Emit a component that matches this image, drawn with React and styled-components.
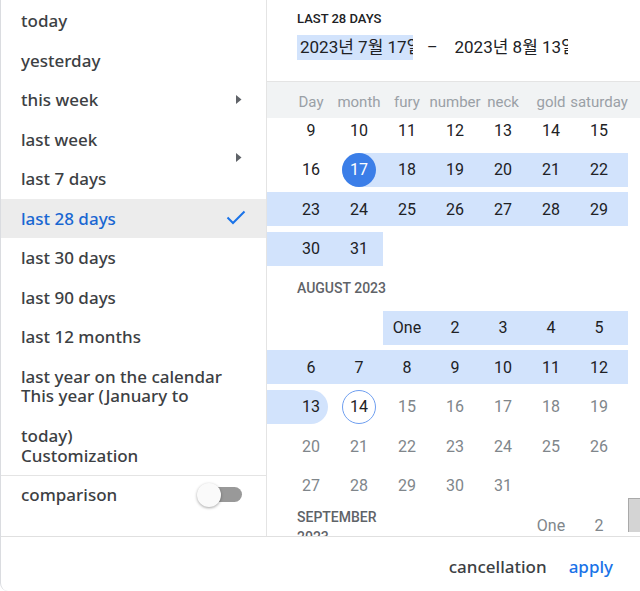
import React from "react";
import styled, { createGlobalStyle, css } from "styled-components";

const Global = createGlobalStyle`
  html, body { margin: 0; padding: 0; background: #fff; }
  * { box-sizing: border-box; }
`;

const SANS = `"Noto Sans", "Open Sans", sans-serif`;
const ROBOTO = `Roboto, "Noto Sans CJK KR", sans-serif`;

const Dialog = styled.div`
  width: 640px;
  height: 591px;
  display: flex;
  flex-direction: column;
  border-left: 1px solid #dadce0;
  border-bottom-left-radius: 8px;
  overflow: hidden;
  background: #fff;
`;

const Main = styled.div`
  display: flex;
  height: 536px;
`;

const Sidebar = styled.div`
  width: 266px;
  flex: none;
  border-right: 1px solid #e4e4e4;
  display: flex;
  flex-direction: column;
  padding-top: 1px;
`;

const Item = styled.div`
  height: 39.5px;
  flex: none;
  display: flex;
  align-items: center;
  padding: 0 20px 0 20px;
  font-family: ${SANS};
  font-size: 17px;
  font-weight: 500;
  line-height: 39.5px;
  color: ${(p) => (p.$active ? "#1967d2" : "#3c4043")};
  background: ${(p) => (p.$active ? "#ececec" : "transparent")};
`;

const ItemText = styled.span`
  flex: 1;
  max-width: 212px;
`;

const Arrow = styled.svg`
  flex: none;
  margin-left: auto;
  margin-right: 4px;
  ${(p) => p.$shift && css`transform: translateY(${p.$shift}px);`}
`;

const Check = styled.svg`
  flex: none;
  margin-left: auto;
`;

const CompareRow = styled.div`
  border-top: 1px solid #e4e4e4;
  height: 38px;
  display: flex;
  align-items: center;
  justify-content: space-between;
  padding: 0 24px 0 20px;
  font-family: ${SANS};
  font-size: 17px;
  font-weight: 500;
  color: #3c4043;
`;

const Toggle = styled.span`
  display: grid;
  align-items: center;
  width: 45px;
  height: 24px;
  & > * { grid-area: 1 / 1; }
`;

const Track = styled.span`
  justify-self: end;
  width: 36px;
  height: 15px;
  border-radius: 8px;
  background: #999;
`;

const Knob = styled.span`
  justify-self: start;
  width: 24px;
  height: 24px;
  border-radius: 50%;
  background: #fafafa;
  box-shadow: 0 1px 3px rgba(0, 0, 0, 0.35);
`;

const Panel = styled.div`
  flex: 1;
  position: relative;
  display: flex;
  flex-direction: column;
  overflow: hidden;
`;

const Header = styled.div`
  height: 82px;
  flex: none;
  border-bottom: 1px solid #e4e4e4;
  padding: 11px 0 0 30px;
`;

const Title = styled.div`
  font-family: ${ROBOTO};
  font-size: 13px;
  font-weight: 500;
  line-height: 16px;
  color: #202124;
`;

const DateRow = styled.div`
  display: flex;
  align-items: center;
  gap: 14px;
  margin-top: 8px;
`;

const DateBox = styled.div`
  width: 116px;
  height: 25px;
  padding: 0 0 0 3px;
  overflow: hidden;
  white-space: nowrap;
  font-family: ${ROBOTO};
  font-size: 17px;
  line-height: 25px;
  color: #202124;
  background: ${(p) => (p.$selected ? "#d2e3fc" : "transparent")};
`;

const Dash = styled.span`
  font-family: ${ROBOTO};
  font-size: 16px;
  color: #202124;
`;

const Weekdays = styled.div`
  height: 36px;
  flex: none;
  background: #f1f3f4;
  display: flex;
  align-items: center;
  padding: 4px 0 0 20px;
`;

const Weekday = styled.span`
  width: 48px;
  flex: none;
  display: flex;
  justify-content: center;
  white-space: nowrap;
  font-family: ${ROBOTO};
  font-size: 15px;
  color: #9aa0a6;
`;

const Body = styled.div`
  flex: 1;
  margin-top: -7.75px;
  overflow: hidden;
`;

const Row = styled.div`
  height: 39.5px;
  display: flex;
  align-items: center;
`;

const Pad = styled.span`
  flex: none;
  width: ${(p) => p.$w}px;
  height: 34px;
  background: ${(p) => (p.$on ? "#d2e3fc" : "transparent")};
`;

const Cell = styled.span`
  flex: none;
  width: 48px;
  height: 34px;
  display: grid;
  & > * { grid-area: 1 / 1; }
`;

const Band = styled.span`
  background: #d2e3fc;
  ${(p) => p.$start && css`margin-left: 7px; border-radius: 17px 0 0 17px;`}
  ${(p) => p.$end && css`margin-right: 7px; border-radius: 0 17px 17px 0;`}
`;

const Num = styled.span`
  justify-self: center;
  width: 34px;
  height: 34px;
  border-radius: 50%;
  display: flex;
  align-items: center;
  justify-content: center;
  font-family: ${ROBOTO};
  font-size: 16px;
  color: ${(p) => (p.$future ? "#80868b" : "#202124")};
  ${(p) => p.$start && css`background: #3b7ee8; color: #fff;`}
  ${(p) => p.$today && css`border: 1px solid #6f9ff0;`}
`;

const MonthLabel = styled.div`
  height: 39.5px;
  display: flex;
  align-items: center;
  padding-left: 30px;
  font-family: ${ROBOTO};
  font-size: 14px;
  font-weight: 500;
  color: #5f6368;
`;

const InlineLabel = styled.span`
  flex: none;
  align-self: flex-start;
  width: ${(p) => p.$w}px;
  padding: 2px 0 0 10px;
  font-family: ${ROBOTO};
  font-size: 14px;
  font-weight: 500;
  line-height: 20px;
  color: #5f6368;
`;

const Thumb = styled.span`
  position: absolute;
  right: 0;
  top: 498px;
  width: 12px;
  height: 34px;
  background: #d4d4d4;
  border-top: 1px solid #a9a9a9;
  border-left: 1px solid #a9a9a9;
`;

const Footer = styled.div`
  flex: 1;
  border-top: 1px solid #e0e0e0;
  display: flex;
  justify-content: flex-end;
  align-items: center;
  gap: 22px;
  padding: 4px 27px 0 0;
`;

const Btn = styled.button`
  border: 0;
  background: none;
  padding: 0;
  font-family: ${SANS};
  font-size: 17px;
  font-weight: 500;
  color: ${(p) => (p.$primary ? "#1a73e8" : "#3c4043")};
`;

const START = new Date(2023, 6, 17).getTime();
const END = new Date(2023, 7, 13).getTime();
const TODAY = new Date(2023, 7, 14).getTime();

function weeksOf(y, m) {
  const offset = new Date(y, m, 1).getDay();
  const days = new Date(y, m + 1, 0).getDate();
  const cells = Array(offset).fill(null);
  for (let d = 1; d <= days; d++) cells.push(new Date(y, m, d).getTime());
  while (cells.length % 7) cells.push(null);
  const weeks = [];
  for (let i = 0; i < cells.length; i += 7) weeks.push(cells.slice(i, i + 7));
  return weeks;
}

const inRange = (t) => t !== null && t >= START && t <= END;

function DayCell({ t }) {
  if (t === null) return <Cell />;
  const d = new Date(t).getDate();
  const isStart = t === START;
  const isEnd = t === END;
  return (
    <Cell>
      {inRange(t) && <Band $start={isStart} $end={isEnd} />}
      <Num $future={t > TODAY} $start={isStart} $today={t === TODAY}>
        {d === 1 ? "One" : d}
      </Num>
    </Cell>
  );
}

function Week({ days, label }) {
  const first = days[0];
  const last = days[6];
  const empties = label ? days.findIndex((x) => x !== null) : 0;
  return (
    <Row>
      <Pad $w={20} $on={inRange(first) && first !== START} />
      {label && <InlineLabel $w={96}>{label}</InlineLabel>}
      {label && <Pad $w={(empties - 2) * 48} />}
      {days.slice(empties).map((t, i) => (
        <DayCell key={i} t={t} />
      ))}
      <Pad $w={5} $on={inRange(last) && last !== END} />
    </Row>
  );
}

const ArrowIcon = ({ shift }) => (
  <Arrow width="6" height="9" viewBox="0 0 6 9" $shift={shift}>
    <path d="M0 0 L5.5 4.5 L0 9 Z" fill="#5f6368" />
  </Arrow>
);

const items = [
  { t: "today" },
  { t: "yesterday" },
  { t: "this week", arrow: 0 },
  { t: "last week", arrow: 18 },
  { t: "last 7 days" },
  { t: "last 28 days", active: true },
  { t: "last 30 days" },
  { t: "last 90 days" },
  { t: "last 12 months" },
  { t: "last year on the calendar" },
  { t: "This year (January to today)" },
  { t: "Customization" },
];

const weekdayNames = ["Day", "month", "fury", "number", "neck", "gold", "saturday"];

export default function App() {
  const july = weeksOf(2023, 6).slice(2);
  const aug = weeksOf(2023, 7);
  const sep = weeksOf(2023, 8).slice(0, 1);
  return (
    <>
      <Global />
      <Dialog>
        <Main>
          <Sidebar>
            {items.map((it) => (
              <Item key={it.t} $active={it.active}>
                <ItemText>{it.t}</ItemText>
                {it.arrow !== undefined && <ArrowIcon shift={it.arrow} />}
                {it.active && (
                  <Check width="20" height="16" viewBox="0 0 20 16">
                    <path d="M1.5 7.5 L7 13 L18.5 1.5" fill="none" stroke="#1a73e8" strokeWidth="2" />
                  </Check>
                )}
              </Item>
            ))}
            <CompareRow>
              <span>comparison</span>
              <Toggle>
                <Track />
                <Knob />
              </Toggle>
            </CompareRow>
          </Sidebar>
          <Panel>
            <Header>
              <Title>LAST 28 DAYS</Title>
              <DateRow>
                <DateBox $selected>2023년 7월 17일</DateBox>
                <Dash>–</Dash>
                <DateBox>2023년 8월 13일</DateBox>
              </DateRow>
            </Header>
            <Weekdays>
              {weekdayNames.map((w) => (
                <Weekday key={w}>{w}</Weekday>
              ))}
            </Weekdays>
            <Body>
              {july.map((w, i) => (
                <Week key={"j" + i} days={w} />
              ))}
              <MonthLabel>AUGUST 2023</MonthLabel>
              {aug.map((w, i) => (
                <Week key={"a" + i} days={w} />
              ))}
              {sep.map((w, i) => (
                <Week key={"s" + i} days={w} label="SEPTEMBER 2023" />
              ))}
            </Body>
            <Thumb />
          </Panel>
        </Main>
        <Footer>
          <Btn>cancellation</Btn>
          <Btn $primary>apply</Btn>
        </Footer>
      </Dialog>
    </>
  );
}
